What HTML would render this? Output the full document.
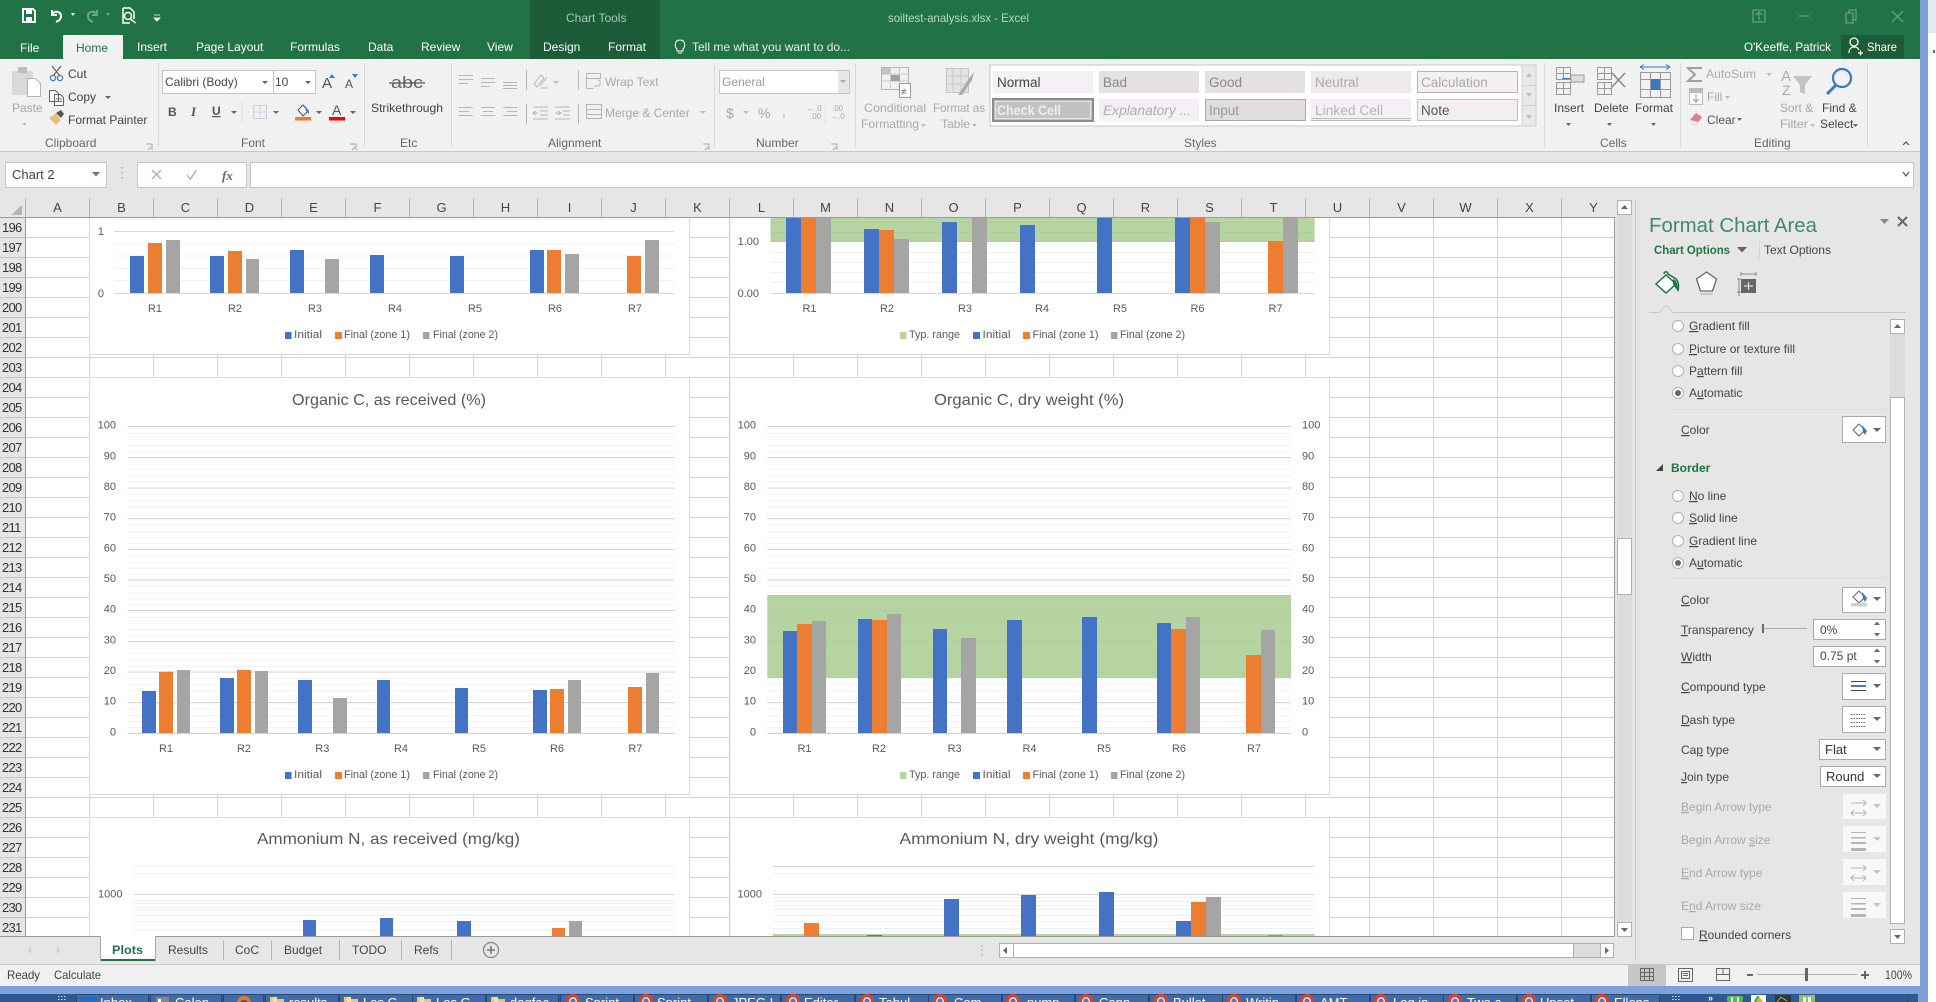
<!DOCTYPE html>
<html lang="en"><head><meta charset="utf-8"><title>soiltest-analysis.xlsx - Excel</title>
<style>
html,body{margin:0;padding:0;background:#fff;width:1936px;height:1002px;overflow:hidden}
svg{display:block}
text{font-family:"Liberation Sans",sans-serif;font-size:12px;fill:#444;white-space:pre}
.w text,text.w{fill:#fff}
.d text,text.d{fill:#a8a8a8}
.g text{fill:#666}
.h text{font-size:13px;fill:#444;text-anchor:middle}
.n text{font-size:13px;fill:#333;letter-spacing:-.7px}
.c text{font-size:11px;fill:#595959}
.m text{font-size:11px;fill:#595959;text-anchor:middle}
.e text{font-size:11px;fill:#595959;text-anchor:end}
.s text{font-size:13.5px}
.b text{font-size:13px;fill:#fff}
.u{text-decoration:underline}
</style></head><body>
<svg xmlns="http://www.w3.org/2000/svg" width="1936" height="1002" viewBox="0 0 1936 1002">
<defs>
<pattern id="grid" patternUnits="userSpaceOnUse" x="25" y="217" width="64" height="20"><rect width="64" height="20" fill="#fff"/><rect x="0" width="1" height="20" fill="#d4d4d4"/><rect y="0" width="64" height="1" fill="#d4d4d4"/></pattern>
<g id="chr"><circle cx="7" cy="8" r="7" fill="#d8432f"/><path d="M1 9.500h12.500L12 15H2z" fill="#e8c53a"/><circle cx="7" cy="8" r="3.800" fill="#fff"/><circle cx="7" cy="8" r="2.600" fill="#3f7fd6"/></g>
<g id="fld"><path d="M0 3h5l2 2h7v8H0z" fill="#edc95f"/><rect x="3" y="3" width="4" height="10" fill="#f6e3a1"/></g>
<g id="arw" fill="none" stroke="#b5b5b5"><path d="M0 5H15M12 2l3 3-3 3M0 15H15M3 12l-3 3 3 3M12 12l3 3-3 3"/></g>
<g id="lin" fill="#b5b5b5"><rect width="15" height="1"/><rect y="5" width="15" height="1.500"/><rect y="10" width="15" height="2"/><rect y="16" width="15" height="3"/></g>
</defs>

<!-- outer -->
<rect width="1936" height="1002" fill="#fff"/>
<rect x="1928" width="8" height="33" fill="#e4e8ef"/>
<rect x="1933" y="50" width="2" height="3" fill="#666"/>
<rect x="1920" width="8" height="994" fill="#7f9fd6"/>
<rect y="986" width="1928" height="8" fill="#7f9fd6"/>

<!-- sheet -->
<rect x="25" y="217" width="1590" height="720" fill="url(#grid)"/>
<path d="M665.500 354V377M729.500 354V377M665.500 794V817M729.500 794V817" stroke="#d4d4d4"/>

<!-- chart 1 -->
<rect x="89.500" y="200" width="600" height="154.500" fill="#fff" stroke="#d9d9d9"/>
<path d="M114 219.500H674.500M114 244H674.500M114 256H674.500M114 268.500H674.500M114 280.500H674.500" stroke="#f0f0f0"/>
<path d="M114 231.500H674.500M114 293.500H674.500" stroke="#d9d9d9"/>
<path fill="#4472c4" d="M130 256h14V293h-14zM210 256h14V293h-14zM290 250h14V293h-14zM370 255h14V293h-14zM450 256h14V293h-14zM530 250h14V293h-14z"/>
<path fill="#ed7d31" d="M148 243h14V293h-14zM228 251h14V293h-14zM547 250h14V293h-14zM627 256h14V293h-14z"/>
<path fill="#a5a5a5" d="M166 240h14V293h-14zM246 259h13V293h-13zM325 259h14V293h-14zM565 254h14V293h-14zM645 240h14V293h-14z"/>
<g class="e"><text x="104" y="235">1</text><text x="104" y="297">0</text></g>
<g class="m"><text x="155" y="312">R1</text><text x="235" y="312">R2</text><text x="315" y="312">R3</text><text x="395" y="312">R4</text><text x="475" y="312">R5</text><text x="555" y="312">R6</text><text x="635" y="312">R7</text></g>
<rect x="285" y="332" width="6.500" height="7" fill="#4472c4"/><rect x="335" y="332" width="7" height="7" fill="#ed7d31"/><rect x="423" y="332" width="6.500" height="7" fill="#a5a5a5"/>
<g class="c"><text x="294" y="338" textLength="28" lengthAdjust="spacingAndGlyphs">Initial</text><text x="344" y="338" textLength="66" lengthAdjust="spacingAndGlyphs">Final (zone 1)</text><text x="433" y="338" textLength="65" lengthAdjust="spacingAndGlyphs">Final (zone 2)</text></g>

<!-- chart 2 -->
<rect x="730" y="200" width="599.500" height="154.500" fill="#fff" stroke="#d9d9d9"/>
<path d="M770.500 252.500H1314.600M770.500 262.500H1314.600M770.500 272.500H1314.600M770.500 282.500H1314.600" stroke="#f0f0f0"/>
<path d="M770.500 293.500H1314.600M770.500 241.500H1314.600" stroke="#d9d9d9"/>
<path d="M770.500 222.500H1314.600M770.500 232.500H1314.600" stroke="#d0d0d0"/>
<rect x="770.500" y="200" width="544" height="42" fill="#a8cc90" fill-opacity=".85"/>
<path fill="#4472c4" d="M786 200h15V293h-15zM864 229h15V293h-15zM942 222h15V293h-15zM1020 225h15V293h-15zM1097 200h15V293h-15zM1175 200h15V293h-15z"/>
<path fill="#ed7d31" d="M801 200h15V293h-15zM879 230h15V293h-15zM1190 200h15V293h-15zM1268 241h15V293h-15z"/>
<path fill="#a5a5a5" d="M816 200h15V293h-15zM894 239h15V293h-15zM972 200h15V293h-15zM1205 222h15V293h-15zM1283 200h15V293h-15z"/>
<g class="e"><text x="759" y="245">1.00</text><text x="759" y="297">0.00</text></g>
<g class="m"><text x="809.500" y="312">R1</text><text x="887" y="312">R2</text><text x="965" y="312">R3</text><text x="1042" y="312">R4</text><text x="1120" y="312">R5</text><text x="1197.500" y="312">R6</text><text x="1275.500" y="312">R7</text></g>
<rect x="900" y="332" width="6.500" height="7" fill="#b6d5a0"/><rect x="973" y="332" width="7" height="7" fill="#4472c4"/><rect x="1023" y="332" width="7" height="7" fill="#ed7d31"/><rect x="1111" y="332" width="6.500" height="7" fill="#a5a5a5"/>
<g class="c"><text x="909" y="338" textLength="51" lengthAdjust="spacingAndGlyphs">Typ. range</text><text x="982.500" y="338" textLength="28" lengthAdjust="spacingAndGlyphs">Initial</text><text x="1032.500" y="338" textLength="66" lengthAdjust="spacingAndGlyphs">Final (zone 1)</text><text x="1120" y="338" textLength="65" lengthAdjust="spacingAndGlyphs">Final (zone 2)</text></g>

<!-- chart 3 -->
<rect x="89.500" y="377.500" width="600" height="417" fill="#fff" stroke="#d9d9d9"/>
<line x1="401" y1="426.600" x2="401" y2="733" stroke="#f3f3f3" stroke-width="547" stroke-dasharray="1 5.134"/>
<path d="M127.600 426.500H674.500M127.600 457.500H674.500M127.600 488H674.500M127.600 518.500H674.500M127.600 549.500H674.500M127.600 580H674.500M127.600 610.500H674.500M127.600 641.500H674.500M127.600 672H674.500M127.600 702.500H674.500" stroke="#d9d9d9"/>
<path d="M127.600 733.500H674.500" stroke="#d0d0d0"/>
<path fill="#4472c4" d="M142 691h14V733h-14zM220 678h14V733h-14zM298 680h14V733h-14zM377 680h13V733h-13zM455 688h13V733h-13zM533 690h14V733h-14z"/>
<path fill="#ed7d31" d="M159 671.700h14V733h-14zM237 670h14V733h-14zM550 689h14V733h-14zM628 687h14V733h-14z"/>
<path fill="#a5a5a5" d="M177 670h13V733h-13zM255 671h13V733h-13zM333 698h14V733h-14zM568 680h13V733h-13zM646 673h13V733h-13z"/>
<text x="389" y="405" text-anchor="middle" textLength="194" lengthAdjust="spacingAndGlyphs" style="font-size:16px;fill:#595959">Organic C, as received (%)</text>
<g class="e" transform="translate(0 -.8)"><text x="116" y="429.500">100</text><text x="116" y="460.500">90</text><text x="116" y="491">80</text><text x="116" y="521.500">70</text><text x="116" y="552.500">60</text><text x="116" y="583">50</text><text x="116" y="613.500">40</text><text x="116" y="644.500">30</text><text x="116" y="675">20</text><text x="116" y="705.500">10</text><text x="116" y="736.500">0</text></g>
<g class="m"><text x="166" y="752">R1</text><text x="244" y="752">R2</text><text x="322.300" y="752">R3</text><text x="401" y="752">R4</text><text x="479" y="752">R5</text><text x="557" y="752">R6</text><text x="635.400" y="752">R7</text></g>
<rect x="285" y="772" width="6.500" height="7" fill="#4472c4"/><rect x="335" y="772" width="7" height="7" fill="#ed7d31"/><rect x="423" y="772" width="6.500" height="7" fill="#a5a5a5"/>
<g class="c"><text x="294" y="778" textLength="28" lengthAdjust="spacingAndGlyphs">Initial</text><text x="344" y="778" textLength="66" lengthAdjust="spacingAndGlyphs">Final (zone 1)</text><text x="433" y="778" textLength="65" lengthAdjust="spacingAndGlyphs">Final (zone 2)</text></g>

<!-- chart 4 -->
<rect x="730" y="377.500" width="599.500" height="417" fill="#fff" stroke="#d9d9d9"/>
<line x1="1029" y1="426.600" x2="1029" y2="733" stroke="#f3f3f3" stroke-width="524" stroke-dasharray="1 5.134"/>
<path d="M767.300 426.500H1291M767.300 457.500H1291M767.300 488H1291M767.300 518.500H1291M767.300 549.500H1291M767.300 580H1291M767.300 610.500H1291M767.300 641.500H1291M767.300 672H1291M767.300 702.500H1291" stroke="#d9d9d9"/>
<path d="M767.300 733.500H1291" stroke="#d0d0d0"/>
<rect x="767.300" y="595" width="523.700" height="83" fill="#a8cc90" fill-opacity=".85"/>
<path fill="#4472c4" d="M783 631h14V733h-14zM858 619h14V733h-14zM933 629h14V733h-14zM1007 620h15V733h-15zM1082 617h15V733h-15zM1157 623h14V733h-14z"/>
<path fill="#ed7d31" d="M797 624h15V733h-15zM872 620h15V733h-15zM1171 629h15V733h-15zM1246 655h15V733h-15z"/>
<path fill="#a5a5a5" d="M812 621h14V733h-14zM887 614h14V733h-14zM961 638h15V733h-15zM1186 617h14V733h-14zM1261 630h14V733h-14z"/>
<text x="1029" y="405" text-anchor="middle" textLength="190" lengthAdjust="spacingAndGlyphs" style="font-size:16px;fill:#595959">Organic C, dry weight (%)</text>
<g class="e" transform="translate(0 -.8)"><text x="756" y="429.500">100</text><text x="756" y="460.500">90</text><text x="756" y="491">80</text><text x="756" y="521.500">70</text><text x="756" y="552.500">60</text><text x="756" y="583">50</text><text x="756" y="613.500">40</text><text x="756" y="644.500">30</text><text x="756" y="675">20</text><text x="756" y="705.500">10</text><text x="756" y="736.500">0</text></g>
<g class="c" transform="translate(0 -.8)"><text x="1302" y="429.500">100</text><text x="1302" y="460.500">90</text><text x="1302" y="491">80</text><text x="1302" y="521.500">70</text><text x="1302" y="552.500">60</text><text x="1302" y="583">50</text><text x="1302" y="613.500">40</text><text x="1302" y="644.500">30</text><text x="1302" y="675">20</text><text x="1302" y="705.500">10</text><text x="1302" y="736.500">0</text></g>
<g class="m"><text x="804.500" y="752">R1</text><text x="879" y="752">R2</text><text x="954.600" y="752">R3</text><text x="1029.500" y="752">R4</text><text x="1104" y="752">R5</text><text x="1179" y="752">R6</text><text x="1254" y="752">R7</text></g>
<rect x="900" y="772" width="6.500" height="7" fill="#b6d5a0"/><rect x="973" y="772" width="7" height="7" fill="#4472c4"/><rect x="1023" y="772" width="7" height="7" fill="#ed7d31"/><rect x="1111" y="772" width="6.500" height="7" fill="#a5a5a5"/>
<g class="c"><text x="909" y="778" textLength="51" lengthAdjust="spacingAndGlyphs">Typ. range</text><text x="982.500" y="778" textLength="28" lengthAdjust="spacingAndGlyphs">Initial</text><text x="1032.500" y="778" textLength="66" lengthAdjust="spacingAndGlyphs">Final (zone 1)</text><text x="1120" y="778" textLength="65" lengthAdjust="spacingAndGlyphs">Final (zone 2)</text></g>

<!-- chart 5 -->
<rect x="89.500" y="817.500" width="600" height="130" fill="#fff" stroke="#d9d9d9"/>
<path d="M133.600 866.500H674.500M133.600 873.500H674.500M133.600 900.500H674.500M133.600 903.500H674.500M133.600 907.500H674.500M133.600 910.500H674.500M133.600 915.500H674.500M133.600 921.500H674.500M133.600 930.500H674.500" stroke="#f0f0f0"/>
<path d="M133.600 894.500H674.500" stroke="#d9d9d9"/>
<path fill="#4472c4" d="M303 920h13V940h-13zM380 918h13V940h-13zM457 921h14V940h-14z"/>
<path fill="#ed7d31" d="M552 928h13V940h-13z"/>
<path fill="#a5a5a5" d="M569 921h13V940h-13z"/>
<text x="388.500" y="844" text-anchor="middle" textLength="263" lengthAdjust="spacingAndGlyphs" style="font-size:16px;fill:#595959">Ammonium N, as received (mg/kg)</text>
<g class="c"><text x="98" y="897.500">1000</text></g>

<!-- chart 6 -->
<rect x="730" y="817.500" width="599.500" height="130" fill="#fff" stroke="#d9d9d9"/>
<path d="M772.800 873.500H1314.600M772.800 897.500H1314.600M772.800 901.500H1314.600M772.800 905.500H1314.600M772.800 909.500H1314.600M772.800 915.500H1314.600M772.800 921.500H1314.600M772.800 928.500H1314.600" stroke="#f0f0f0"/>
<path d="M772.800 866.500H1314.600M772.800 894.500H1314.600" stroke="#d9d9d9"/>
<rect x="772.800" y="934" width="541.800" height="3" fill="#b6d5a0"/>
<path fill="#4472c4" d="M867 935h15v5h-15zM944 899h15V940h-15zM1021 895h15V940h-15zM1099 892h15V940h-15zM1176 921h15V940h-15z"/>
<path fill="#ed7d31" d="M804 923h15V940h-15zM1191 902h15V940h-15zM1268 935h15v5h-15z"/>
<path fill="#a5a5a5" d="M1206 897h15V940h-15z"/>
<text x="1029" y="844" text-anchor="middle" textLength="259" lengthAdjust="spacingAndGlyphs" style="font-size:16px;fill:#595959">Ammonium N, dry weight (mg/kg)</text>
<g class="c"><text x="737.500" y="897.500">1000</text></g>

<!-- title bar -->
<rect width="1920" height="59" fill="#217346"/>
<rect x="530" width="130" height="59" fill="#1c5c38"/>
<rect x="63" y="35" width="60" height="24" fill="#f1f1f1"/>
<path d="M23 9h10l2 2v11H23z" fill="none" stroke="#fff" stroke-width="2"/><rect x="26" y="9" width="6" height="5" fill="#fff"/><rect x="26" y="17" width="6" height="5" fill="#fff"/>
<path d="M52 10v5h5M52 14c4-4 9-2 9 2s-3 5-5 6" fill="none" stroke="#fff" stroke-width="2"/><path d="M71 13l4 0-2 3z" fill="#fff"/>
<path d="M97 10v5h-5M97 14c-4-4-9-2-9 2s3 5 5 6" fill="none" stroke="#6fa488" stroke-width="2"/><path d="M106 13l4 0-2 3z" fill="#6fa488"/>
<path d="M123 8h7l4 4v7M123 8v15h7" fill="none" stroke="#fff" stroke-width="1.500"/><circle cx="128" cy="16" r="3.500" fill="none" stroke="#fff" stroke-width="1.500"/><path d="M130.500 19l5 4" stroke="#fff" stroke-width="1.500"/>
<path d="M154 15h6M154 18l6 0-3 3z" fill="#fff" stroke="#fff" stroke-width=".8"/>
<text x="566" y="22" style="fill:#a8c9b5">Chart Tools</text>
<text x="888" y="22" textLength="141" lengthAdjust="spacingAndGlyphs" style="fill:#bcd6c6">soiltest-analysis.xlsx - Excel</text>
<g fill="none" stroke="#6a9e80" stroke-width="1.300"><path d="M1753 10h12M1753 10v12h12V10M1759 20v-7M1756 15l3-3 3 3"/><path d="M1799 16h10"/><path d="M1846 13h7v10h-7zM1849 13v-3h7v10h-3"/><path d="M1892 11l11 11M1903 11l-11 11"/></g>
<text class="w" x="20" y="52">File</text>
<text x="76" y="52" style="fill:#217346">Home</text>
<g class="w"><text x="137" y="51">Insert</text><text x="196" y="51">Page Layout</text><text x="290" y="51">Formulas</text><text x="368" y="51">Data</text><text x="421" y="51">Review</text><text x="487" y="51">View</text><text x="543" y="51">Design</text><text x="608" y="51">Format</text><text x="692" y="51" style="fill:#e6efe9">Tell me what you want to do...</text><text x="1744" y="51" textLength="87" lengthAdjust="spacingAndGlyphs">O'Keeffe, Patrick</text></g>
<path d="M677 49c-3-3-2-9 3-9s6 6 3 9v2h-6zM678 53h4" fill="none" stroke="#fff"/>
<rect x="1841" y="35" width="63" height="23" fill="#1c5c38"/>
<circle cx="1854" cy="42" r="4" fill="none" stroke="#fff" stroke-width="1.300"/><path d="M1849 53c0-4 2-6 5-6s4 1 5 3M1858 53h5M1860.500 50.500v5" fill="none" stroke="#fff" stroke-width="1.200"/>
<text class="w" x="1867" y="51" textLength="30" lengthAdjust="spacingAndGlyphs">Share</text>

<!-- ribbon -->
<rect y="59" width="1920" height="93" fill="#f1f1f1"/>
<rect y="151" width="1920" height="1" fill="#c8c8c8"/>
<path d="M158.500 63v84M364.500 63v84M451.500 63v84M714.500 63v84M855.500 63v84M1544.500 63v84M1680.500 63v84M1867.500 63v84" stroke="#d8d8d8"/>
<g class="g"><text x="45" y="147">Clipboard</text><text x="241" y="147">Font</text><text x="400" y="147">Etc</text><text x="548" y="147">Alignment</text><text x="756" y="147">Number</text><text x="1184" y="147">Styles</text><text x="1600" y="147">Cells</text><text x="1754" y="147">Editing</text></g>
<g fill="none" stroke="#a8a8a8"><path d="M146 144h6v6M148 150l3-3M350 144h6v6M352 150l3-3M703 144h6v6M705 150l3-3M831 144h6v6M833 150l3-3"/></g>
<path d="M1903 145l3-3 3 3" fill="none" stroke="#555" stroke-width="1.200"/>

<!-- clipboard -->
<rect x="12" y="71" width="21" height="24" fill="#d9d9d9"/><rect x="18" y="67" width="9" height="6" fill="#bdbdbd"/><path d="M27.500 78.500h8l5 5v13h-13z" fill="#fff" stroke="#b5b5b5"/>
<text class="d" x="12" y="112">Paste</text><path d="M22 123h5l-2.500 2.500z" fill="#b5b5b5"/>
<path d="M52 66l8 10M61 66l-8 10" stroke="#666" stroke-width="1.300"/><circle cx="53" cy="78" r="2.600" fill="none" stroke="#3b78c4" stroke-width="1.300"/><circle cx="60" cy="78" r="2.600" fill="none" stroke="#3b78c4" stroke-width="1.300"/>
<text x="68" y="78">Cut</text>
<path d="M49.500 90.500h6l3 3v8h-9zM54.500 94.500h6l3 3v8h-9z" fill="#fff" stroke="#666"/><path d="M56 99h6M56 101.500h6" stroke="#3b78c4"/>
<text x="68" y="101">Copy</text><path d="M105 96h6l-3 3z" fill="#666"/>
<path d="M49 118l7-5 5 7-5 5z" fill="#e5c07a"/><path d="M56 113l5-3 3 4-3 4z" fill="#555"/>
<text x="68" y="124">Format Painter</text>

<!-- font -->
<rect x="162.500" y="70.500" width="111" height="23" fill="#fff" stroke="#c6c6c6"/><rect x="273.500" y="70.500" width="42" height="23" fill="#fff" stroke="#c6c6c6"/>
<text x="165" y="86">Calibri (Body)</text><text x="275" y="86">10</text>
<path d="M262 81h6l-3 3zM305 81h6l-3 3z" fill="#666"/>
<text x="322" y="88" style="font-size:15px;fill:#555">A</text><path d="M329 78h6l-3-4z" fill="#3b78c4"/>
<text x="345" y="88" style="font-size:12px;fill:#555">A</text><path d="M352 74h6l-3 4z" fill="#3b78c4"/>
<text x="168" y="116" style="font-weight:bold;fill:#555">B</text><text x="191" y="116" style="font-style:italic;font-family:'Liberation Serif',serif;font-size:13px;font-weight:bold;fill:#555">I</text><text x="212" y="115" class="u" style="font-weight:bold;fill:#555">U</text>
<path d="M231 111h6l-3 3zM273 111h6l-3 3zM316 111h6l-3 3zM350 111h6l-3 3z" fill="#666"/>
<path d="M242 102v20" stroke="#dcdcdc"/>
<rect x="253.500" y="105.500" width="13" height="13" fill="none" stroke="#b9a6c9" stroke-dasharray="1 1"/><path d="M260 106v12M254 112h12" stroke="#c4b5d0" stroke-dasharray="1 1"/>
<path d="M298 110l5-5 5 6-5 5z" fill="#fff" stroke="#555"/><path d="M305 106l4 5v3l-3-3z" fill="#3b78c4"/><rect x="295" y="117" width="16" height="3.500" fill="#ed7d31"/>
<text x="332" y="115" style="font-size:14px;fill:#555">A</text><rect x="329" y="117" width="16" height="3.500" fill="#f00"/>

<!-- etc -->
<text x="391" y="88" textLength="32" lengthAdjust="spacingAndGlyphs" style="font-size:17px;fill:#666">abc</text><path d="M389 83h36" stroke="#555" stroke-width="1.300"/>
<text x="371" y="112" textLength="72" lengthAdjust="spacingAndGlyphs">Strikethrough</text>

<!-- alignment -->
<g stroke="#b5b5b5" fill="none"><path d="M459 75.500h14M459 79.500h14M459 83.500h9M481 78.500h14M481 82.500h14M481 86.500h9M503 82.500h14M503 85.500h14M503 88.500h14"/><path d="M459 107.500h14M459 111.500h10M459 115.500h14M481 107.500h14M483 111.500h10M481 115.500h14M503 107.500h14M507 111.500h10M503 115.500h14"/><path d="M526.500 70v20M526.500 104v20M578.500 70v20M578.500 104v20"/><path d="M534 84l7-9 3 3-7 9zM540 86l7-9M541 88l7 0"/><path d="M533 107h15M540 111h8M540 115h8M533 119h15M533 113h5M536 111l-3 2 3 2M555 107h15M563 111h7M563 115h7M555 119h15M555 113h6M558 111l3 2-3 2"/><path d="M586.500 73.500h14v5h-14zM586.500 78.500v10h7M598 80c3 0 3 6 0 6h-4"/><path d="M586.500 104.500h15v14h-15zM586.500 109.500h15M586.500 114.500h15"/></g>
<path d="M553 81h6l-3 3zM700 111h6l-3 3z" fill="#bbb"/>
<g class="d"><text x="605" y="86">Wrap Text</text><text x="605" y="117">Merge &amp; Center</text></g>

<!-- number -->
<rect x="719.500" y="70.500" width="130" height="23" fill="#fff" stroke="#c6c6c6"/><rect x="838" y="71" width="11" height="22" fill="#e6e6e6"/>
<text x="722" y="86" style="fill:#9a9a9a">General</text><path d="M840 80h6l-3 3z" fill="#aaa"/>
<g class="d"><text x="726" y="118" style="font-size:14px">$</text><text x="758" y="118" style="font-size:14px">%</text><text x="782" y="116" style="font-size:14px">,</text></g>
<path d="M743 111h6l-3 3z" fill="#bbb"/>
<g class="d"><text x="807" y="111" style="font-size:8px">←.0</text><text x="810" y="119" style="font-size:8px">.00</text><text x="832" y="111" style="font-size:8px">.00</text><text x="830" y="119" style="font-size:8px">→.0</text></g>
<path d="M825 105v20" stroke="#e4e4e4"/>

<!-- styles -->
<rect x="881.500" y="67.500" width="27" height="22" fill="none" stroke="#b5b5b5"/><path d="M881.500 74h27M881.500 81h27M890.500 67v22M899.500 67v22" stroke="#c8c8c8"/><rect x="891" y="75" width="9" height="6" fill="#a0a0a0"/><rect x="882" y="68" width="8" height="6" fill="#c4c4c4"/>
<rect x="899.500" y="83.500" width="11" height="14" fill="#fff" stroke="#999"/><text x="901" y="95" style="font-size:10px;fill:#666">≠</text>
<rect x="946.500" y="68.500" width="22" height="24" fill="#e4e4e4" stroke="#c4c4c4"/><path d="M946 76h22M946 84h22M953 68v24M961 68v24" stroke="#c9c9c9"/><path d="M958 95l12-18 4-5-2 8-10 15z" fill="#aaa"/>
<g class="d"><text x="864" y="112" textLength="62" lengthAdjust="spacingAndGlyphs">Conditional</text><text x="861" y="128" textLength="58" lengthAdjust="spacingAndGlyphs">Formatting</text><text x="933" y="112" textLength="52" lengthAdjust="spacingAndGlyphs">Format as</text><text x="941" y="128" textLength="29" lengthAdjust="spacingAndGlyphs">Table</text></g>
<path d="M921 124h5l-2.500 3zM972 124h5l-2.500 3z" fill="#bbb"/>
<rect x="990" y="65" width="532" height="61" fill="#fff" stroke="#c6c6c6"/>
<rect x="1522" y="65" width="14" height="61" fill="#e9e9e9" stroke="#d0d0d0"/><path d="M1522 85.500h14M1522 105.500h14" stroke="#d0d0d0"/><path d="M1526 77h6l-3-4zM1526 93h6l-3 4zM1526 115h6l-3 4z" fill="#c0c0c0"/>
<rect x="993" y="71" width="100" height="22" fill="#f4f0f5"/>
<rect x="1099" y="71" width="100" height="22" fill="#e5e1e3"/>
<rect x="1205" y="71" width="100" height="22" fill="#e5e1e3"/>
<rect x="1311" y="71" width="100" height="22" fill="#eee9ec"/>
<rect x="1417.500" y="71.500" width="100" height="21" fill="#f3eff3" stroke="#b5b1b5"/>
<rect x="993" y="99" width="100" height="22" fill="#c4c1c4" stroke="#8c8c8c" stroke-width="2"/><rect x="995.500" y="101.500" width="95" height="17" fill="none" stroke="#e4e0e4"/>
<rect x="1099" y="99" width="100" height="22" fill="#f4f0f5"/>
<rect x="1205.500" y="99.500" width="100" height="21" fill="#e0dcdf" stroke="#a8a4a8"/>
<rect x="1311" y="99" width="100" height="22" fill="#f4f0f5"/><path d="M1311 118.500h100M1311 120.500h100" stroke="#bbb"/>
<rect x="1417.500" y="99.500" width="100" height="21" fill="#f2eef2" stroke="#c3c3c3"/>
<g class="s"><text x="997" y="87">Normal</text><text x="1103" y="87" style="fill:#888">Bad</text><text x="1209" y="87" style="fill:#888">Good</text><text x="1315" y="87" style="fill:#aaa">Neutral</text><text x="1421" y="87" style="fill:#aaa">Calculation</text><text x="997" y="115" style="fill:#eee;font-weight:bold" textLength="64" lengthAdjust="spacingAndGlyphs">Check Cell</text><text x="1103" y="115" style="fill:#b0acb0;font-style:italic" textLength="88" lengthAdjust="spacingAndGlyphs">Explanatory ...</text><text x="1209" y="115" style="fill:#999">Input</text><text x="1315" y="115" style="fill:#b5b1b5" textLength="68" lengthAdjust="spacingAndGlyphs">Linked Cell</text><text x="1421" y="115" style="fill:#555">Note</text></g>

<!-- cells -->
<g fill="none" stroke="#999"><path d="M1556.500 67.500h14v12h-14zM1563.500 67.500v12M1556.500 73.500h14M1556.500 82.500h14v12h-14zM1563.500 82.500v12M1556.500 88.500h14"/><path d="M1597.500 67.500h14v12h-14zM1604.500 67.500v12M1597.500 73.500h14M1597.500 82.500h14v12h-14zM1604.500 82.500v12M1597.500 88.500h14"/><path d="M1640.500 72.500h30v25h-30zM1640.500 79.500h30M1640.500 89.500h30M1650.500 72v25M1660.500 72v25"/></g>
<rect x="1571" y="75" width="13" height="7" fill="#ddd" stroke="#999"/><path d="M1570 78.500h-8" stroke="#3b78c4"/>
<path d="M1612 73l13 14M1625 73l-13 14" stroke="#888" stroke-width="1.500"/>
<rect x="1651" y="79" width="9" height="11" fill="#3b78c4"/><path d="M1640 67h30M1640 67l4-2.500M1640 67l4 2.500M1670 67l-4-2.500M1670 67l-4 2.500" stroke="#3b78c4" fill="none"/>
<text x="1554" y="112">Insert</text><text x="1594" y="112">Delete</text><text x="1635" y="112">Format</text>
<path d="M1566 123h5l-2.500 3zM1607 123h5l-2.500 3zM1651 123h5l-2.500 3z" fill="#666"/>

<!-- editing -->
<path d="M1702 68h-14l7 6.500-7 6.500h14" fill="none" stroke="#a0a0a0" stroke-width="2"/>
<text class="d" x="1706" y="78" textLength="50" lengthAdjust="spacingAndGlyphs">AutoSum</text><path d="M1766 73h6l-3 3z" fill="#bbb"/>
<rect x="1689.500" y="88.500" width="13" height="16" fill="#fff" stroke="#bbb"/><rect x="1689" y="88" width="14" height="5" fill="#bbb"/><path d="M1696 94v8M1693 99l3 3 3-3" fill="none" stroke="#7aa0d0"/>
<text class="d" x="1707" y="101">Fill</text><path d="M1725 96h5l-2.500 3z" fill="#bbb"/>
<path d="M1690 120l6-7 6 4-6 8h-3z" fill="#e57b88"/><path d="M1690 120l3 5h3l2-3z" fill="#eee" stroke="#ccc" stroke-width=".5"/>
<text x="1707" y="124" style="fill:#555">Clear</text><path d="M1737 118h5l-2.500 3z" fill="#666"/>
<g class="d"><text x="1781" y="81" style="font-size:15px;fill:#aaa">A</text><text x="1782" y="95" style="font-size:14px;fill:#aaa">Z</text><text x="1780" y="112" textLength="33" lengthAdjust="spacingAndGlyphs">Sort &amp;</text><text x="1780" y="128" textLength="28" lengthAdjust="spacingAndGlyphs">Filter</text></g>
<path d="M1793 76h19l-7 9v9l-5-2v-7z" fill="#c4c4c4"/>
<circle cx="1842" cy="78" r="9" fill="none" stroke="#3b78c4" stroke-width="2.200"/><path d="M1836 85l-9 9" stroke="#3b78c4" stroke-width="3"/>
<text x="1822" y="112">Find &amp;</text><text x="1820" y="128">Select</text>
<path d="M1810 124h5l-2.500 3z" fill="#bbb"/><path d="M1853 124h5l-2.500 3z" fill="#666"/>

<!-- formula bar -->
<rect y="152" width="1920" height="46" fill="#e6e6e6"/>
<rect x="5.500" y="162.500" width="101" height="25" fill="#fff" stroke="#c6c6c6"/>
<text x="12" y="179" style="font-size:13px">Chart 2</text><path d="M92 172h8l-4 4.500z" fill="#777"/>
<path d="M122 167v1.500M122 172v1.500M122 177v1.500" stroke="#aaa" stroke-width="1.500"/>
<rect x="137.500" y="162.500" width="109" height="25" fill="#fff" stroke="#c6c6c6"/>
<path d="M152 170l9 9M161 170l-9 9M187 175l3.500 4 6-9" fill="none" stroke="#bbb" stroke-width="1.600"/>
<text x="222" y="180" style="font-family:'Liberation Serif',serif;font-style:italic;font-weight:bold;font-size:13px;fill:#666">fx</text>
<rect x="250.500" y="162.500" width="1663" height="25" fill="#fff" stroke="#c6c6c6"/>
<path d="M1903 172l3 4 3-4" fill="none" stroke="#555" stroke-width="1.200"/>

<!-- headers -->
<rect y="198" width="1615" height="19" fill="#e6e6e6"/>
<rect y="217" width="25.500" height="719" fill="#e6e6e6"/>
<path d="M22 205v10h-11z" fill="#b5b5b5"/>
<path d="M25.500 198v19M89.500 198v19M153.500 198v19M217.500 198v19M281.500 198v19M345.500 198v19M409.500 198v19M473.500 198v19M537.500 198v19M601.500 198v19M665.500 198v19M729.500 198v19M793.500 198v19M857.500 198v19M921.500 198v19M985.500 198v19M1049.500 198v19M1113.500 198v19M1177.500 198v19M1241.500 198v19M1305.500 198v19M1369.500 198v19M1433.500 198v19M1497.500 198v19M1561.500 198v19" stroke="#b4b4b4"/>
<path d="M0 217.500H1615M25.500 217V936" stroke="#9a9a9a"/>
<g class="h"><text x="57.500" y="212">A</text><text x="121.500" y="212">B</text><text x="185.500" y="212">C</text><text x="249.500" y="212">D</text><text x="313.500" y="212">E</text><text x="377.500" y="212">F</text><text x="441.500" y="212">G</text><text x="505.500" y="212">H</text><text x="569.500" y="212">I</text><text x="633.500" y="212">J</text><text x="697.500" y="212">K</text><text x="761.500" y="212">L</text><text x="825.500" y="212">M</text><text x="889.500" y="212">N</text><text x="953.500" y="212">O</text><text x="1017.500" y="212">P</text><text x="1081.500" y="212">Q</text><text x="1145.500" y="212">R</text><text x="1209.500" y="212">S</text><text x="1273.500" y="212">T</text><text x="1337.500" y="212">U</text><text x="1401.500" y="212">V</text><text x="1465.500" y="212">W</text><text x="1529.500" y="212">X</text><text x="1593.500" y="212">Y</text></g>
<path d="M0 237.500h25M0 257.500h25M0 277.500h25M0 297.500h25M0 317.500h25M0 337.500h25M0 357.500h25M0 377.500h25M0 397.500h25M0 417.500h25M0 437.500h25M0 457.500h25M0 477.500h25M0 497.500h25M0 517.500h25M0 537.500h25M0 557.500h25M0 577.500h25M0 597.500h25M0 617.500h25M0 637.500h25M0 657.500h25M0 677.500h25M0 697.500h25M0 717.500h25M0 737.500h25M0 757.500h25M0 777.500h25M0 797.500h25M0 817.500h25M0 837.500h25M0 857.500h25M0 877.500h25M0 897.500h25M0 917.500h25" stroke="#c4c4c4"/>
<g class="n"><text x="2" y="232">196</text><text x="2" y="252">197</text><text x="2" y="272">198</text><text x="2" y="292">199</text><text x="2" y="312">200</text><text x="2" y="332">201</text><text x="2" y="352">202</text><text x="2" y="372">203</text><text x="2" y="392">204</text><text x="2" y="412">205</text><text x="2" y="432">206</text><text x="2" y="452">207</text><text x="2" y="472">208</text><text x="2" y="492">209</text><text x="2" y="512">210</text><text x="2" y="532">211</text><text x="2" y="552">212</text><text x="2" y="572">213</text><text x="2" y="592">214</text><text x="2" y="612">215</text><text x="2" y="632">216</text><text x="2" y="652">217</text><text x="2" y="672">218</text><text x="2" y="692">219</text><text x="2" y="712">220</text><text x="2" y="732">221</text><text x="2" y="752">222</text><text x="2" y="772">223</text><text x="2" y="792">224</text><text x="2" y="812">225</text><text x="2" y="832">226</text><text x="2" y="852">227</text><text x="2" y="872">228</text><text x="2" y="892">229</text><text x="2" y="912">230</text><text x="2" y="932">231</text></g>

<!-- side area and right scrollbar -->
<rect x="1615" y="198" width="305" height="766" fill="#e6e6e6"/>
<path d="M1614.500 217V936" stroke="#9a9a9a"/>
<rect x="1617" y="200" width="15" height="737" fill="#dcdcdc"/>
<rect x="1617.500" y="200.500" width="14" height="14" fill="#fff" stroke="#b0b0b0"/><path d="M1621 209h7l-3.500-4z" fill="#666"/>
<rect x="1617.500" y="538.500" width="14" height="56" fill="#fff" stroke="#b0b0b0"/>
<rect x="1617.500" y="922.500" width="14" height="14" fill="#fff" stroke="#b0b0b0"/><path d="M1621 928h7l-3.500 4z" fill="#666"/>
<path d="M1635.500 200V961" stroke="#c8c8c8"/>

<!-- tab bar -->
<rect y="936" width="1615" height="28" fill="#e6e6e6"/>
<path d="M0 936.500H1615" stroke="#9a9a9a"/>
<path d="M31 947v7l-3.500-3.500zM57 947v7l3.500-3.500z" fill="#cfcfcf"/>
<rect x="100.500" y="936" width="55" height="24" fill="#fff"/><rect x="100.500" y="959" width="55" height="2" fill="#217346"/><path d="M100.500 936v24M155.500 936v24" stroke="#aaa"/>
<text x="112" y="954" textLength="31" lengthAdjust="spacingAndGlyphs" style="font-weight:bold;fill:#217346">Plots</text>
<text x="168" y="954">Results</text><text x="235" y="954">CoC</text><text x="284" y="954">Budget</text><text x="352" y="954">TODO</text><text x="414" y="954">Refs</text>
<path d="M223.500 940v20M271.500 940v20M339.500 940v20M401.500 940v20M451.500 940v20" stroke="#b5b5b5"/>
<circle cx="491" cy="950" r="7.500" fill="none" stroke="#888" stroke-width="1.300"/><path d="M487 950h8M491 946v8" stroke="#777" stroke-width="1.500"/>
<path d="M982 945v1.500M982 949.500v1.500M982 954v1.500" stroke="#aaa" stroke-width="1.500"/>
<rect x="999.500" y="943.500" width="614" height="14" fill="#dcdcdc" stroke="#b0b0b0"/>
<rect x="1013.500" y="943.500" width="560" height="14" fill="#fff" stroke="#b0b0b0"/>
<rect x="999.500" y="943.500" width="14" height="14" fill="#fff" stroke="#b0b0b0"/><path d="M1007 947v7l-4-3.500z" fill="#666"/>
<rect x="1600.500" y="943.500" width="13" height="14" fill="#fff" stroke="#b0b0b0"/><path d="M1605 947v7l4-3.500z" fill="#666"/>

<!-- status bar -->
<rect y="964" width="1920" height="22" fill="#f0f0f0"/>
<path d="M0 964.500H1920" stroke="#c6c6c6"/>
<text x="7" y="979" textLength="33" lengthAdjust="spacingAndGlyphs">Ready</text><text x="54" y="979" textLength="47" lengthAdjust="spacingAndGlyphs">Calculate</text>
<rect x="1628" y="965" width="38" height="21" fill="#c6c6c6"/>
<path d="M1640.500 968.500h13v12h-13zM1640.500 972.500h13M1640.500 976.500h13M1644.500 968.500v12M1649.500 968.500v12" fill="none" stroke="#666"/>
<path d="M1678.500 968.500h14v13h-14zM1681.500 971.500h8v7h-8zM1683 973.500h5M1683 975.500h5" fill="none" stroke="#666"/>
<path d="M1716.500 968.500h13v12h-13zM1723 968.500v6h-6.500M1723 974.500h6.500" fill="none" stroke="#666"/>
<rect x="1747" y="974" width="6" height="2" fill="#666"/>
<path d="M1757 974.500H1857" stroke="#b0b0b0"/><rect x="1805" y="968" width="3" height="13" fill="#666"/>
<path d="M1861 975h8M1865 971v8" stroke="#666" stroke-width="2"/>
<text x="1885" y="979" textLength="27" lengthAdjust="spacingAndGlyphs">100%</text>

<!-- format pane -->
<text x="1649" y="232" textLength="168" lengthAdjust="spacingAndGlyphs" style="font-size:20px;fill:#3f8a6c">Format Chart Area</text>
<path d="M1880 219h9l-4.500 5z" fill="#888"/><path d="M1898 217l9 9M1907 217l-9 9" stroke="#666" stroke-width="2"/>
<text x="1654" y="254" textLength="76" lengthAdjust="spacingAndGlyphs" style="font-weight:bold;fill:#217346">Chart Options</text>
<path d="M1737 247h10l-5 5.500z" fill="#666"/><path d="M1759.500 241v19" stroke="#d6d6d6"/>
<text x="1764" y="254" textLength="67" lengthAdjust="spacingAndGlyphs">Text Options</text>
<path d="M1656 284l10-9 10 9-10 9z" fill="#fff" stroke="#217346" stroke-width="1.500"/><path d="M1664 274c0-3 4-3 4 0l8 5c3 3 3 7 2 12-1-4-2-7-5-8" fill="none" stroke="#217346" stroke-width="1.500"/><path d="M1673 279c3 1 5 4 5 12-2-3-5-5-5-8z" fill="#217346"/>
<path d="M1706.500 272l10 7-4 12h-12l-4-12z" fill="#fff" stroke="#666" stroke-width="1.300"/><path d="M1700 294h13" stroke="#aaa"/>
<path d="M1741 274h15M1741 272v4M1756 272v4M1737 279h4M1739 279v17M1737 292h4" stroke="#888" fill="none"/><rect x="1741" y="279" width="15" height="14" fill="#666"/><path d="M1744 286h9M1748.500 282v8" stroke="#fff"/>
<path d="M1649 312.500h10l7-7 7 7h233" fill="none" stroke="#c6c6c6"/>

<g fill="#fff" stroke="#b0b0b0"><circle cx="1678" cy="326" r="5.500"/><circle cx="1678" cy="349" r="5.500"/><circle cx="1678" cy="371" r="5.500"/><circle cx="1678" cy="393" r="5.500"/><circle cx="1678" cy="496" r="5.500"/><circle cx="1678" cy="518" r="5.500"/><circle cx="1678" cy="541" r="5.500"/><circle cx="1678" cy="563" r="5.500"/></g>
<circle cx="1678" cy="393" r="3" fill="#666"/><circle cx="1678" cy="563" r="3" fill="#666"/>
<text x="1689" y="330"><tspan class="u">G</tspan>radient fill</text>
<text x="1689" y="353"><tspan class="u">P</tspan>icture or texture fill</text>
<text x="1689" y="375">P<tspan class="u">a</tspan>ttern fill</text>
<text x="1689" y="397">A<tspan class="u">u</tspan>tomatic</text>
<path d="M1671 409.500H1886M1671 578.500H1886" stroke="#dcdcdc"/>
<text x="1681" y="434"><tspan class="u">C</tspan>olor</text>
<rect x="1842.500" y="416.500" width="43" height="26" fill="#fff" stroke="#aaa"/>
<path d="M1853 430l6-6 6 6-6 6z" fill="#fff" stroke="#666"/><path d="M1862 425l5 6-2 4-2-3z" fill="#3b78c4"/><path d="M1873 428h8l-4 4z" fill="#666"/>
<path d="M1656 471h7v-7z" fill="#444"/>
<text x="1671" y="472" style="font-weight:bold;fill:#217346">Border</text>
<text x="1689" y="500"><tspan class="u">N</tspan>o line</text>
<text x="1689" y="522"><tspan class="u">S</tspan>olid line</text>
<text x="1689" y="545"><tspan class="u">G</tspan>radient line</text>
<text x="1689" y="567">A<tspan class="u">u</tspan>tomatic</text>
<text x="1681" y="604"><tspan class="u">C</tspan>olor</text>
<rect x="1842.500" y="587.500" width="43" height="25" fill="#fff" stroke="#aaa"/>
<path d="M1853 597l6-6 6 6-6 6z" fill="#fff" stroke="#666"/><path d="M1862 592l5 6-2 4-2-3z" fill="#3b78c4"/><rect x="1851" y="603" width="16" height="3.500" fill="#d0d0d0"/><path d="M1873 597h8l-4 4z" fill="#666"/>
<text x="1681" y="634"><tspan class="u">T</tspan>ransparency</text>
<path d="M1763 624v9" stroke="#666" stroke-width="2"/><path d="M1763 628.500H1807" stroke="#aaa"/>
<rect x="1813.500" y="619.500" width="72" height="20" fill="#fff" stroke="#aaa"/><text x="1820" y="634">0%</text>
<text x="1681" y="661"><tspan class="u">W</tspan>idth</text>
<rect x="1813.500" y="646.500" width="72" height="20" fill="#fff" stroke="#aaa"/><text x="1820" y="660">0.75 pt</text>
<path d="M1874 625h6l-3-3.500zM1874 633h6l-3 3.500zM1874 652h6l-3-3.500zM1874 660h6l-3 3.500z" fill="#666"/>
<text x="1681" y="691"><tspan class="u">C</tspan>ompound type</text>
<rect x="1842.500" y="673.500" width="43" height="26" fill="#fff" stroke="#aaa"/>
<path d="M1851 681.500h15M1851 690.500h15" stroke="#444"/><rect x="1851" y="685" width="15" height="2" fill="#4a78b8"/><path d="M1873 684h8l-4 4z" fill="#666"/>
<text x="1681" y="724"><tspan class="u">D</tspan>ash type</text>
<rect x="1842.500" y="706.500" width="43" height="26" fill="#fff" stroke="#aaa"/>
<path d="M1851 714.500h15M1851 718.500h15M1851 722.500h15M1851 726.500h15" stroke="#666" stroke-dasharray="1.500 1"/><path d="M1873 717h8l-4 4z" fill="#666"/>
<text x="1681" y="754">Ca<tspan class="u">p</tspan> type</text>
<rect x="1819.500" y="739.500" width="66" height="20" fill="#fff" stroke="#aaa"/><text x="1825" y="754" style="font-size:13px;fill:#333">Flat</text><path d="M1873 747h8l-4 4z" fill="#666"/>
<text x="1681" y="781"><tspan class="u">J</tspan>oin type</text>
<rect x="1820.500" y="766.500" width="65" height="20" fill="#fff" stroke="#aaa"/><text x="1826" y="781" style="font-size:13px;fill:#333">Round</text><path d="M1873 774h8l-4 4z" fill="#666"/>
<g class="d"><text x="1681" y="811"><tspan class="u">B</tspan>egin Arrow type</text><text x="1681" y="844">Begin Arrow <tspan class="u">s</tspan>ize</text><text x="1681" y="877"><tspan class="u">E</tspan>nd Arrow type</text><text x="1681" y="910">E<tspan class="u">n</tspan>d Arrow size</text></g>
<g fill="#f8f8f8"><rect x="1843" y="794" width="43" height="25"/><rect x="1843" y="826" width="43" height="26"/><rect x="1843" y="859" width="43" height="26"/><rect x="1843" y="892" width="43" height="26"/></g>
<use href="#arw" x="1851" y="798"/><use href="#lin" x="1851" y="832"/><use href="#arw" x="1851" y="863"/><use href="#lin" x="1851" y="898"/>
<path d="M1873 804h8l-4 4zM1873 837h8l-4 4zM1873 870h8l-4 4zM1873 903h8l-4 4z" fill="#c4c4c4"/>
<rect x="1681.500" y="927.500" width="12" height="12" fill="#fff" stroke="#aaa"/>
<text x="1699" y="939"><tspan class="u">R</tspan>ounded corners</text>
<!-- pane scroll -->
<rect x="1890" y="319" width="15" height="624" fill="#dcdcdc"/>
<rect x="1890.500" y="319.500" width="14" height="14" fill="#fff" stroke="#b0b0b0"/><path d="M1894 328h7l-3.500-4z" fill="#666"/>
<rect x="1890.500" y="397.500" width="14" height="526" fill="#fff" stroke="#b0b0b0"/>
<rect x="1890" y="924" width="15" height="5" fill="#e6e6e6"/>
<rect x="1890.500" y="929.500" width="14" height="14" fill="#fff" stroke="#b0b0b0"/><path d="M1894 935h7l-3.500 4z" fill="#666"/>

<!-- taskbar -->
<rect y="994" width="1920" height="8" fill="#2d5a93"/>
<g fill="#3f6ca6" stroke="#25497a"><rect x="76.500" y="994.500" width="72" height="10"/><rect x="150.500" y="994.500" width="71" height="10"/><rect x="223.500" y="994.500" width="40" height="10"/><rect x="265.500" y="994.500" width="73" height="10"/><rect x="339.500" y="994.500" width="73" height="10"/><rect x="412.500" y="994.500" width="73" height="10"/><rect x="486.500" y="994.500" width="72" height="10"/><rect x="560.500" y="994.500" width="73" height="10"/><rect x="634.500" y="994.500" width="73" height="10"/><rect x="708.500" y="994.500" width="72" height="10"/><rect x="781.500" y="994.500" width="73" height="10"/><rect x="855.500" y="994.500" width="73" height="10"/><rect x="928.500" y="994.500" width="73" height="10"/><rect x="1002.500" y="994.500" width="72" height="10"/><rect x="1075.500" y="994.500" width="73" height="10"/><rect x="1149.500" y="994.500" width="73" height="10"/><rect x="1222.500" y="994.500" width="73" height="10"/><rect x="1296.500" y="994.500" width="73" height="10"/><rect x="1370.500" y="994.500" width="73" height="10"/><rect x="1443.500" y="994.500" width="73" height="10"/><rect x="1517.500" y="994.500" width="73" height="10"/><rect x="1591.500" y="994.500" width="68" height="10"/></g>
<rect x="81" y="997" width="14" height="6" fill="#1f6fc4"/><rect x="156" y="997" width="13" height="6" fill="#888"/><rect x="158" y="999" width="3" height="3" fill="#fff"/>
<circle cx="244" cy="1003" r="7" fill="#e8762b"/><circle cx="244" cy="1004" r="4" fill="#3c4fa0"/>
<use href="#fld" x="270" y="994"/><use href="#fld" x="344" y="994"/><use href="#fld" x="417" y="994"/><use href="#fld" x="491" y="994"/>
<use href="#chr" x="566" y="993"/><use href="#chr" x="639" y="993"/><use href="#chr" x="713" y="993"/><use href="#chr" x="786" y="993"/><use href="#chr" x="860" y="993"/><use href="#chr" x="933" y="993"/><use href="#chr" x="1006" y="993"/><use href="#chr" x="1079" y="993"/><use href="#chr" x="1154" y="993"/><use href="#chr" x="1227" y="993"/><use href="#chr" x="1300" y="993"/><use href="#chr" x="1374" y="993"/><use href="#chr" x="1448" y="993"/><use href="#chr" x="1522" y="993"/><use href="#chr" x="1595" y="993"/>
<g class="b"><text x="100" y="1007">Inbox</text><text x="175" y="1007">Calen</text><text x="289" y="1007">results</text><text x="363" y="1007">Los G</text><text x="436" y="1007">Los G</text><text x="510" y="1007">dagfac</text><text x="585" y="1007">Sprint</text><text x="657" y="1007">Sprint</text><text x="732" y="1007">JPEG I</text><text x="804" y="1007">Editor</text><text x="879" y="1007">Tabul</text><text x="954" y="1007">Com</text><text x="1027" y="1007">pump</text><text x="1099" y="1007">Cann</text><text x="1173" y="1007">Bullet</text><text x="1246" y="1007">Writin</text><text x="1320" y="1007">AMT</text><text x="1393" y="1007">Log in</text><text x="1467" y="1007">Two a</text><text x="1540" y="1007">Upset</text><text x="1614" y="1007">Ellens</text></g>
<path d="M58 996.500h1.500M61 996.500h1.500M64 996.500h1.500M58 999.500h1.500M61 999.500h1.500M64 999.500h1.500" stroke="#cfe0f5"/>
<path d="M1672 996.500h1.500M1675 996.500h1.500M1678 996.500h1.500M1672 999.500h1.500M1675 999.500h1.500M1678 999.500h1.500" stroke="#cfe0f5"/>
<text class="w" x="1708" y="1001" style="font-size:9px;font-weight:bold">»</text>
<rect x="1727" y="996" width="16" height="6" rx="2" fill="#5cb85c"/><rect x="1731" y="997" width="2" height="5" fill="#d5efd5"/><rect x="1737" y="997" width="2" height="5" fill="#d5efd5"/>
<rect x="1751" y="995" width="15" height="7" fill="#fff"/><path d="M1756 1002l3-6 4 6z" fill="#f4b400"/><path d="M1754 1002l3-6 2 0-3 6z" fill="#1a9d5f"/>
<rect x="1775" y="995" width="16" height="7" fill="#333"/><path d="M1777 1002l4-5 6 4" fill="none" stroke="#8fd14f"/>
<rect x="1799" y="995" width="16" height="7" fill="#8fc060"/><rect x="1803" y="997" width="3" height="5" fill="#f0f8e8"/><rect x="1808" y="997" width="3" height="5" fill="#f0f8e8"/>
<path d="M1907.500 994v8" stroke="#25497a"/>
<rect x="1918" y="994" width="10" height="8" fill="#7f9fd6"/>
</svg>
</body></html>
